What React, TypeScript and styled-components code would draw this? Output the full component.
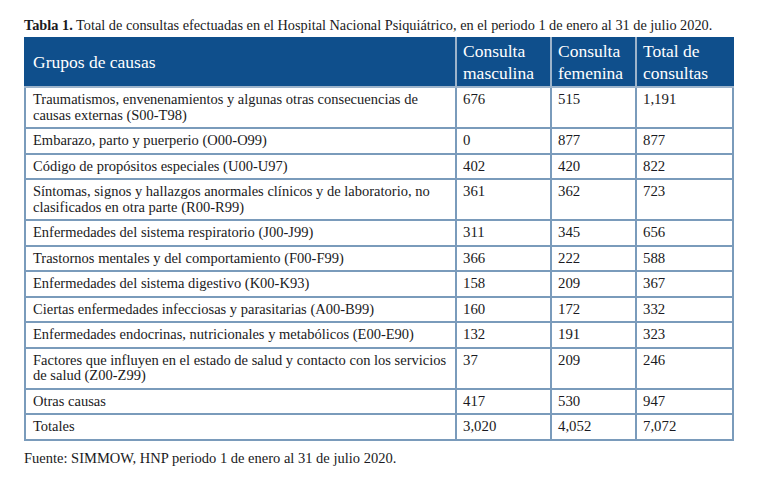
import React from "react";
import styled, { createGlobalStyle } from "styled-components";

const serif = `"Liberation Serif", "Times New Roman", serif`;

const Global = createGlobalStyle`
  html, body { margin: 0; padding: 0; background: #ffffff; }
  body { font-family: ${serif}; color: #1a1a22; }
`;

const Page = styled.div`
  padding: 16px 0 0 24px;
  width: 712px;
  font-family: ${serif};
`;

const Title = styled.div`
  font-family: ${serif};
  font-size: 14.3px;
  line-height: 18px;
  margin-bottom: 3px;
  white-space: nowrap;
  b { font-weight: 700; }
`;

const Table = styled.table`
  border-collapse: collapse;
  width: 708px;
  table-layout: fixed;
  font-family: ${serif};
`;

const Col = styled.col<{ $w: number }>`
  width: ${(p) => p.$w}px;
`;

const Th = styled.th`
  box-sizing: border-box;
  background: #0f4f8c;
  color: #ffffff;
  font-family: ${serif};
  font-weight: 400;
  font-size: 17.5px;
  line-height: 21.5px;
  text-align: left;
  vertical-align: middle;
  padding: 2px 3px 2px 6px;
  border: 2px solid #9db4cb;
  border-top-color: #0f4f8c;
  &:first-child { border-left-color: #0f4f8c; padding-left: 7px; }
  &:last-child { border-right-color: #0f4f8c; }
`;

const Td = styled.td<{ $num?: boolean }>`
  box-sizing: border-box;
  font-family: ${serif};
  font-size: ${(p) => (p.$num ? 14.8 : 14.5)}px;
  line-height: 15.5px;
  vertical-align: top;
  padding: 4px 4px 4px ${(p) => (p.$num ? 6 : 7)}px;
  border: 2px solid #7a9bbb;
`;

const Footer = styled.div`
  font-family: ${serif};
  font-size: 14.5px;
  line-height: 18px;
  margin-top: 8px;
`;

const rows: [string, string, string, string][] = [
  ["Traumatismos, envenenamientos y algunas otras consecuencias de causas externas (S00-T98)", "676", "515", "1,191"],
  ["Embarazo, parto y puerperio (O00-O99)", "0", "877", "877"],
  ["Código de propósitos especiales (U00-U97)", "402", "420", "822"],
  ["Síntomas, signos y hallazgos anormales clínicos y de laboratorio, no clasificados en otra parte (R00-R99)", "361", "362", "723"],
  ["Enfermedades del sistema respiratorio (J00-J99)", "311", "345", "656"],
  ["Trastornos mentales y del comportamiento (F00-F99)", "366", "222", "588"],
  ["Enfermedades del sistema digestivo (K00-K93)", "158", "209", "367"],
  ["Ciertas enfermedades infecciosas y parasitarias (A00-B99)", "160", "172", "332"],
  ["Enfermedades endocrinas, nutricionales y metabólicos (E00-E90)", "132", "191", "323"],
  ["Factores que influyen en el estado de salud y contacto con los servicios de salud (Z00-Z99)", "37", "209", "246"],
  ["Otras causas", "417", "530", "947"],
  ["Totales", "3,020", "4,052", "7,072"],
];

export default function App() {
  return (
    <>
      <Global />
      <Page>
        <Title>
          <b>Tabla 1.</b> Total de consultas efectuadas en el Hospital Nacional Psiquiátrico, en el periodo 1 de enero al 31 de julio 2020.
        </Title>
        <Table>
          <colgroup>
            <Col $w={431} />
            <Col $w={95} />
            <Col $w={85} />
            <Col $w={97} />
          </colgroup>
          <thead>
            <tr>
              <Th>Grupos de causas</Th>
              <Th>Consulta masculina</Th>
              <Th>Consulta femenina</Th>
              <Th>Total de consultas</Th>
            </tr>
          </thead>
          <tbody>
            {rows.map((r) => (
              <tr key={r[0]}>
                <Td>{r[0]}</Td>
                <Td $num>{r[1]}</Td>
                <Td $num>{r[2]}</Td>
                <Td $num>{r[3]}</Td>
              </tr>
            ))}
          </tbody>
        </Table>
        <Footer>Fuente: SIMMOW, HNP periodo 1 de enero al 31 de julio 2020.</Footer>
      </Page>
    </>
  );
}
